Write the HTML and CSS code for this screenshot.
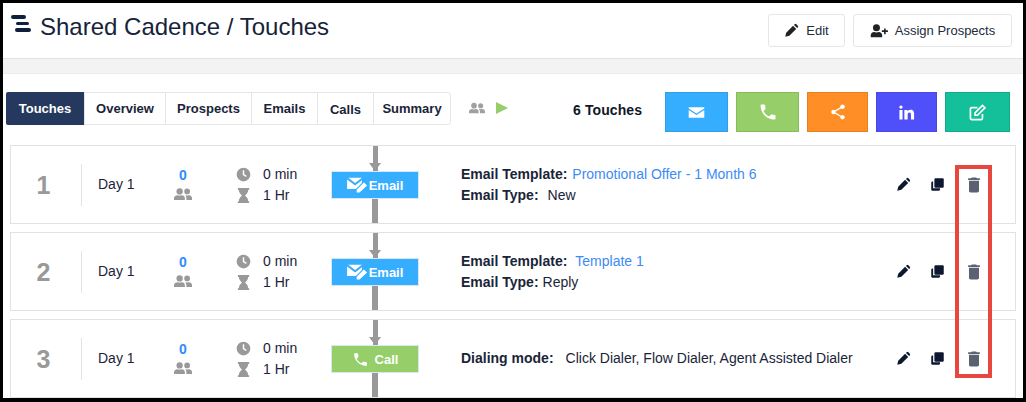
FILE: index.html
```html
<!DOCTYPE html>
<html lang="en">
<head>
    <meta charset="UTF-8">
    <title>Shared Cadence / Touches</title>
    <link rel="stylesheet" href="styles.css">
</head>
<body>

<svg class="sprites" width="0" height="0">
    <symbol id="i-pencil" viewBox="0 0 24 24"><path d="M2 22l1.500-6.500L14.500 4.500 19.500 9.500 8.500 20.500zM16 3l1-1a2 2 0 0 1 2.800 0l2.200 2.200a2 2 0 0 1 0 2.800l-1 1z"/></symbol>
    <symbol id="i-trash" viewBox="0 0 24 24"><path d="M6 19c0 1.100.9 2 2 2h8c1.100 0 2-.9 2-2V7H6v12zM19 4h-3.500l-1-1h-5l-1 1H5v2h14V4z"/></symbol>
    <symbol id="i-users" viewBox="0 0 24 24"><circle cx="7.500" cy="8.500" r="4.200"/><circle cx="17.500" cy="8.500" r="3.800"/><path d="M0 20v-2.500C0 15 2.500 13.500 4.500 13.500c2 .8 4 .8 6 0 2 0 4 1.500 4 4V20z"/><path d="M16.500 20v-2.500c0-1.600-.6-3-1.800-4 .8 0 1.400 0 2.800.4 1.400-.4 2-.4 2.500-.4 2 0 4 1.500 4 4V20z"/></symbol>
    <symbol id="i-clock" viewBox="0 0 24 24"><path fill-rule="evenodd" d="M12 1a11 11 0 1 0 0 22 11 11 0 0 0 0-22zM10.800 5h2.400v6.500l4 2.300-1.200 2-5.200-3z"/></symbol>
    <symbol id="i-hourglass" viewBox="0 0 24 24"><path d="M3 0h18v3h-1.500c0 4.500-3 6.500-5 9 2 2.500 5 4.500 5 9H21v3H3v-3h1.500c0-4.500 3-6.500 5-9-2-2.500-5-4.500-5-9H3z"/></symbol>
    <symbol id="i-mail" viewBox="0 0 24 24"><path d="M1 4.500h22v1.800l-11 7-11-7zM1 8.400l11 7 11-7v11.100H1z"/></symbol>
    <symbol id="i-mail-edit" viewBox="0 0 26 20"><path d="M1.500 1h17L10 7.500zM0 3l10 7.500L18.500 4v3.500L11 15H0z"/><path d="M21 7l4 3.500-9.500 9H12v-3.500z"/></symbol>
    <symbol id="i-phone" viewBox="0 0 24 24"><path d="M6.600 10.800c1.400 2.800 3.800 5.100 6.600 6.600l2.200-2.200c.3-.3.7-.4 1-.2 1.100.4 2.300.6 3.600.6.600 0 1 .4 1 1V20c0 .6-.4 1-1 1C10.600 21 3 13.400 3 4c0-.6.4-1 1-1h3.500c.6 0 1 .4 1 1 0 1.300.2 2.500.6 3.600.1.300 0 .7-.2 1z"/></symbol>
    <symbol id="i-share" viewBox="0 0 24 24"><path d="M18 16.080c-.76 0-1.440.3-1.960.77L8.910 12.700c.05-.23.09-.46.09-.7s-.04-.47-.09-.7l7.050-4.110c.54.5 1.250.81 2.040.81 1.660 0 3-1.340 3-3s-1.340-3-3-3-3 1.340-3 3c0 .24.04.47.09.7L8.040 9.810C7.500 9.310 6.790 9 6 9c-1.660 0-3 1.340-3 3s1.340 3 3 3c.79 0 1.500-.31 2.040-.81l7.120 4.160c-.05.21-.08.43-.08.650 0 1.610 1.310 2.920 2.920 2.920 1.610 0 2.920-1.310 2.920-2.920s-1.310-2.920-2.920-2.920z"/></symbol>
    <symbol id="i-linkedin" viewBox="0 0 24 24"><path d="M2 8.500h4.400V22H2zM4.200 2a2.400 2.400 0 1 1 0 4.800 2.400 2.400 0 0 1 0-4.800zM9 8.500h4.200v1.900c.7-1.200 2.200-2.300 4.300-2.300 4.400 0 5.200 2.900 5.200 6.600V22h-4.400v-6.500c0-1.600 0-3.600-2.200-3.600s-2.500 1.700-2.500 3.500V22H9z"/></symbol>
    <symbol id="i-note" viewBox="0 0 24 24"><path fill="none" stroke="currentColor" stroke-width="2.400" d="M19 14v6a2 2 0 0 1-2 2H4a2 2 0 0 1-2-2V7a2 2 0 0 1 2-2h8"/><path fill="none" stroke="currentColor" stroke-width="2.200" d="M8.500 12.500L19 2l3.500 3.500L12 16H8.500z"/></symbol>
    <symbol id="i-clone" viewBox="0 0 24 24"><path d="M9 2h11a2 2 0 0 1 2 2v11a2 2 0 0 1-2 2H9a2 2 0 0 1-2-2V4a2 2 0 0 1 2-2z"/><path d="M5 7v11h11v2a2 2 0 0 1-2 2H4a2 2 0 0 1-2-2V9a2 2 0 0 1 2-2z"/></symbol>
    <symbol id="i-user-plus" viewBox="0 0 28 22"><circle cx="10" cy="6" r="5.500"/><path d="M1 21v-3c0-3.500 2.500-5.500 5-5.500 2.500 1 5.500 1 8 0 2.500 0 5 2 5 5.500v3z"/><path d="M22 7h2.500v3H28v2.500h-3.500V16H22v-3.500h-3.500V10H22z"/></symbol>
</svg>

<div class="frame">
    <header class="topbar">
        <div class="page-title">
            <span class="logo"><i></i><i></i><i></i></span>
            <h1>Shared Cadence / Touches</h1>
        </div>
        <div class="top-actions">
            <a class="btn btn-edit"><svg class="ico"><use href="#i-pencil"/></svg>Edit</a>
            <a class="btn btn-assign"><svg class="ico ico-user"><use href="#i-user-plus"/></svg>Assign Prospects</a>
        </div>
    </header>
    <div class="strip"></div>

    <div class="toolbar">
        <nav class="tabs">
            <a class="tab tab-touches active">Touches</a>
            <a class="tab tab-overview">Overview</a>
            <a class="tab tab-prospects">Prospects</a>
            <a class="tab tab-emails">Emails</a>
            <a class="tab tab-calls">Calls</a>
            <a class="tab tab-summary">Summary</a>
        </nav>
        <svg class="status-users"><use href="#i-users"/></svg>
        <span class="status-play"></span>
        <b class="touch-count">6 Touches</b>
        <div class="add-buttons">
            <a class="add add-email"><svg><use href="#i-mail"/></svg></a>
            <a class="add add-call"><svg><use href="#i-phone"/></svg></a>
            <a class="add add-share"><svg><use href="#i-share"/></svg></a>
            <a class="add add-linkedin"><svg><use href="#i-linkedin"/></svg></a>
            <a class="add add-note"><svg><use href="#i-note"/></svg></a>
        </div>
    </div>

    <div class="touches">
        <div class="touch">
            <div class="num">1</div>
            <div class="day">Day 1</div>
            <div class="people"><b>0</b><svg><use href="#i-users"/></svg></div>
            <div class="timing">
                <div><svg><use href="#i-clock"/></svg>0 min</div>
                <div><svg><use href="#i-hourglass"/></svg>1 Hr</div>
            </div>
            <div class="flow">
                <div class="arrow"></div>
                <div class="flow-box email"><svg class="mail-edit"><use href="#i-mail-edit"/></svg>Email</div>
                <div class="tail"></div>
            </div>
            <div class="details">
                <div><b>Email Template:</b><a class="link">Promotional Offer - 1 Month 6</a></div>
                <div><b>Email Type:</b><span class="val">New</span></div>
            </div>
            <div class="row-actions">
                <svg><use href="#i-pencil"/></svg>
                <svg><use href="#i-clone"/></svg>
                <svg class="del"><use href="#i-trash"/></svg>
            </div>
        </div>

        <div class="touch">
            <div class="num">2</div>
            <div class="day">Day 1</div>
            <div class="people"><b>0</b><svg><use href="#i-users"/></svg></div>
            <div class="timing">
                <div><svg><use href="#i-clock"/></svg>0 min</div>
                <div><svg><use href="#i-hourglass"/></svg>1 Hr</div>
            </div>
            <div class="flow">
                <div class="arrow"></div>
                <div class="flow-box email"><svg class="mail-edit"><use href="#i-mail-edit"/></svg>Email</div>
                <div class="tail"></div>
            </div>
            <div class="details">
                <div><b>Email Template:</b><a class="link link-wide">Template 1</a></div>
                <div><b>Email Type:</b><span class="val val-tight">Reply</span></div>
            </div>
            <div class="row-actions">
                <svg><use href="#i-pencil"/></svg>
                <svg><use href="#i-clone"/></svg>
                <svg class="del"><use href="#i-trash"/></svg>
            </div>
        </div>

        <div class="touch">
            <div class="num">3</div>
            <div class="day">Day 1</div>
            <div class="people"><b>0</b><svg><use href="#i-users"/></svg></div>
            <div class="timing">
                <div><svg><use href="#i-clock"/></svg>0 min</div>
                <div><svg><use href="#i-hourglass"/></svg>1 Hr</div>
            </div>
            <div class="flow">
                <div class="arrow"></div>
                <div class="flow-box call"><svg class="phone"><use href="#i-phone"/></svg>Call</div>
                <div class="tail"></div>
            </div>
            <div class="details">
                <div><b>Dialing mode:</b><span class="val val-wide">Click Dialer, Flow Dialer, Agent Assisted Dialer</span></div>
            </div>
            <div class="row-actions">
                <svg><use href="#i-pencil"/></svg>
                <svg><use href="#i-clone"/></svg>
                <svg class="del"><use href="#i-trash"/></svg>
            </div>
        </div>
    </div>

    <div class="highlight"></div>
</div>

</body>
</html>
```

FILE: styles.css
```css
* {
    box-sizing: border-box;
}
html, body {
    margin: 0;
    height: 100%;
    background: #000;
    overflow: hidden;
}
body {
    font-family: "Liberation Sans", Arial, sans-serif;
    font-size: 14px;
    color: #101828;
}
.sprites {
    position: absolute;
}
svg {
    fill: currentColor;
}
.frame {
    position: relative;
    margin: 3px 3px 0 3px;
    height: 395px;
    background: #fff;
    overflow: hidden;
}

/* top bar */
.topbar {
    height: 56px;
    display: flex;
    justify-content: space-between;
    border-bottom: 1px solid #e2e2e2;
}
.page-title {
    display: flex;
    padding: 10px 0 0 8px;
}
.logo {
    display: flex;
    flex-direction: column;
    gap: 3px;
    width: 22px;
    margin-top: 2px;
}
.logo i {
    display: block;
    height: 4px;
    border-radius: 2px;
    background: #101f3c;
}
.logo i:nth-child(1) { width: 15px; }
.logo i:nth-child(2) { width: 13px; margin-left: 5px; height: 3px; }
.logo i:nth-child(3) { width: 16px; margin-left: 4px; }
.page-title h1 {
    margin: 0 0 0 7px;
    font-size: 24px;
    line-height: 27px;
    font-weight: normal;
    color: #17233a;
}
.top-actions {
    display: flex;
    gap: 8px;
    padding: 11px 11px 0 0;
}
.btn {
    display: flex;
    align-items: center;
    justify-content: center;
    height: 33px;
    border: 1px solid #e6e6e6;
    border-radius: 3px;
    font-size: 13px;
    color: #222b3c;
}
.btn-edit { width: 77px; }
.btn-assign { width: 159px; }
.ico {
    width: 15px;
    height: 15px;
    margin-right: 7px;
    color: #222;
}
.ico-user {
    width: 18px;
    height: 14px;
    margin-right: 7px;
}
.strip {
    height: 15px;
    background: #f3f3f3;
    border-bottom: 1px solid #ececec;
}

/* tabs and add buttons */
.toolbar {
    display: flex;
    align-items: flex-start;
    padding: 18px 0 0 3px;
    height: 71px;
}
.tabs {
    display: flex;
    height: 33px;
    border: 1px solid #e6e6e6;
    border-radius: 3px;
}
.tab {
    display: flex;
    align-items: center;
    justify-content: center;
    font-size: 13px;
    font-weight: bold;
    color: #1a2438;
    border-right: 1px solid #e6e6e6;
}
.tab:last-child { border-right: none; }
.tab-touches { width: 79px; }
.tab-overview { width: 81px; }
.tab-prospects { width: 86px; }
.tab-emails { width: 66px; }
.tab-calls { width: 56px; padding-top: 2px; }
.tab-summary { width: 76px; }
.tab.active {
    background: #25395e;
    color: #fff;
    border-radius: 2px 0 0 2px;
    margin: -1px 0 -1px -1px;
    height: 33px;
}
.status-users {
    width: 16px;
    height: 16px;
    margin: 8px 0 0 18px;
    color: #a0a0a0;
}
.status-play {
    width: 0;
    height: 0;
    margin: 10px 0 0 11px;
    border-left: 12px solid #96cf6a;
    border-top: 6.500px solid transparent;
    border-bottom: 6.500px solid transparent;
}
.touch-count {
    margin: 10px 0 0 65px;
    font-size: 14px;
    line-height: 16px;
    letter-spacing: 0.1px;
    width: 92px;
}
.add-buttons {
    display: flex;
    gap: 8px;
}
.add {
    display: flex;
    align-items: center;
    justify-content: center;
    height: 40px;
    border: 1px solid;
    color: #fff;
}
.add svg {
    width: 17px;
    height: 17px;
}
.add-email { width: 63px; background: #35aeff; border-color: #2f9fe8; }
.add-call { width: 63px; background: #96cf6a; border-color: #86bc5c; }
.add-call svg { width: 20px; height: 20px; }
.add-share { width: 61px; background: #ff8e26; border-color: #e8801f; }
.add-share svg { width: 18px; height: 18px; }
.add-linkedin { width: 61px; background: #5050fb; border-color: #4848e0; }
.add-note { width: 65px; background: #13c09a; border-color: #11ab8a; }

/* touch rows */
.touches {
    display: flex;
    flex-direction: column;
    gap: 8px;
    padding: 0 7px 0 7px;
}
.touch {
    display: flex;
    align-items: center;
    flex: none;
    height: 79px;
    border: 1px solid #e2e2e2;
    font-size: 14px;
}
.num {
    width: 71px;
    height: 42px;
    padding-right: 5px;
    border-right: 1px solid #e2e2e2;
    color: #999;
    font-size: 25px;
    font-weight: bold;
    line-height: 42px;
    text-align: center;
}
.day {
    width: 80px;
    padding: 0 0 2px 16px;
    color: #1a2438;
}
.people {
    width: 42px;
    display: flex;
    flex-direction: column;
    align-items: center;
    margin-right: 32px;
    color: #999;
}
.people b {
    color: #2f8cff;
    font-size: 14px;
    line-height: 16px;
    margin: 1px 0 3px;
}
.people svg {
    width: 18px;
    height: 18px;
    margin-top: -1px;
}
.timing {
    width: 95px;
    color: #1a2438;
}
.timing div {
    display: flex;
    align-items: center;
    height: 21px;
}
.timing svg {
    width: 15px;
    height: 15px;
    margin-right: 12px;
    color: #999;
}
.flow {
    align-self: stretch;
    width: 88px;
    display: flex;
    flex-direction: column;
    align-items: center;
}
.arrow {
    position: relative;
    height: 25px;
    width: 5px;
    background: #999;
}
.arrow::after {
    content: "";
    position: absolute;
    left: -4px;
    bottom: 0;
    border-left: 6.500px solid transparent;
    border-right: 6.500px solid transparent;
    border-top: 8px solid #999;
}
.flow-box {
    display: flex;
    align-items: center;
    justify-content: center;
    width: 100%;
    height: 28px;
    border: 1px solid #d9e8f2;
    color: #fff;
    font-size: 13px;
    font-weight: bold;
}
.flow-box.email { background: #35aeff; }
.flow-box.call { background: #96cf6a; }
.mail-edit {
    width: 21px;
    height: 16px;
    margin-right: 1px;
}
.phone {
    width: 17px;
    height: 17px;
    margin-right: 6px;
}
.tail {
    flex: 1;
    width: 6px;
    background: #999;
}
.details {
    width: 443px;
    margin-left: 42px;
    color: #1a2438;
}
.details div {
    height: 21px;
    line-height: 21px;
    white-space: nowrap;
}
.link {
    margin-left: 5px;
    color: #3d8bf5;
}
.link-wide { margin-left: 8px; }
.val { margin-left: 9px; }
.val-tight { margin-left: 4px; }
.val-wide { margin-left: 12px; }
.row-actions {
    display: flex;
    align-items: center;
    color: #0d1730;
    margin-left: -8px;
}
.row-actions svg {
    width: 15px;
    height: 15px;
    margin-right: 19px;
}
.row-actions .del {
    width: 20px;
    height: 20px;
    margin-right: 0;
    color: #5b6170;
}

/* red highlight drawn over the delete column */
.highlight {
    position: absolute;
    left: 952px;
    top: 162px;
    width: 37px;
    height: 213px;
    border: 4px solid #e8473f;
}
```
